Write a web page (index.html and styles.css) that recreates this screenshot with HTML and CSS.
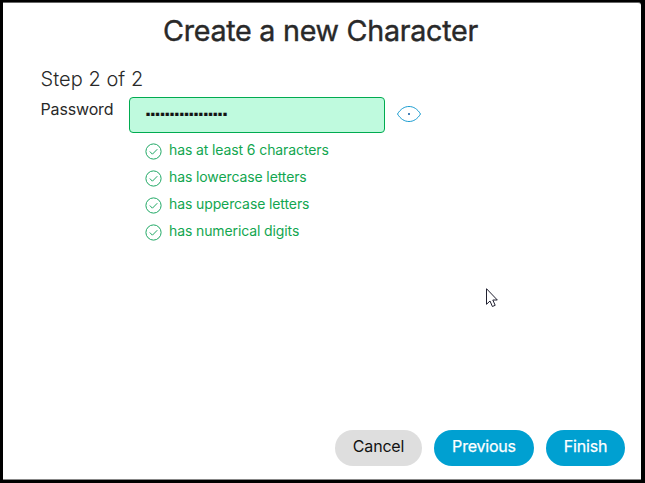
FILE: index.html
```html
<!DOCTYPE html>
<html lang="en">
<head>
<meta charset="utf-8">
<title>Create a new Character</title>
<link rel="stylesheet" href="styles.css">
</head>
<body>
<svg width="0" height="0" class="defs">
  <symbol id="check" viewBox="0 0 17 17"><circle cx="8.5" cy="8.5" r="7.6"/><path d="M4.8 8.5l2.6 2.7 4.9-5"/></symbol>
</svg>
<main class="dialog">
  <h1 class="title">Create a new Character</h1>
  <h2 class="step">Step 2 of 2</h2>
  <div class="row">
    <label class="label" for="pw">Password</label>
    <div class="field" id="pw">▪▪▪▪▪▪▪▪▪▪▪▪▪▪▪▪▪</div>
    <svg class="eye" viewBox="0 0 24 16"><path d="M.5 8C3.500 3 7.500.5 12 .5S20.500 3 23.500 8C20.500 13 16.500 15.500 12 15.500S3.500 13 .5 8z"/><rect x="11" y="7" width="2" height="2"/></svg>
  </div>
  <ul class="rules">
    <li><svg class="check"><use href="#check"/></svg><span>has at least 6 characters</span></li>
    <li><svg class="check"><use href="#check"/></svg><span>has lowercase letters</span></li>
    <li><svg class="check"><use href="#check"/></svg><span>has uppercase letters</span></li>
    <li><svg class="check"><use href="#check"/></svg><span>has numerical digits</span></li>
  </ul>
  <footer class="actions">
    <button class="btn cancel">Cancel</button>
    <button class="btn previous">Previous</button>
    <button class="btn finish">Finish</button>
  </footer>
</main>
<svg class="cursor" viewBox="0 0 12 20"><path d="M.5.7v15.600l3.500-3.300 2.400 5.500 2.800-1.200-2.400-5.300h4.500z"/></svg>
</body>
</html>
```
FILE: styles.css
```css
* { box-sizing: border-box; }
body {
  margin: 0;
  height: 483px;
  padding: 2px 4px 3px 3px;
  overflow: hidden;
  background: #000;
  color: #292929;
  font-family: Inter, "Liberation Sans", sans-serif;
}
.defs { position: absolute; }
.dialog {
  height: 478px;
  display: flex;
  flex-direction: column;
  background: #fff;
  border-top: 1px solid #666;
  border-bottom: 1px solid #888;
  border-top-right-radius: 3px;
}
.title {
  margin: 10px 0 0;
  padding-right: 3px;
  text-align: center;
  font-size: 28.700px;
  line-height: 36px;
  font-weight: 400;
  letter-spacing: -.28px;
  -webkit-text-stroke: .4px #292929;
}
.step {
  margin: 17px 0 0 37.5px;
  font-size: 20px;
  line-height: 26px;
  font-weight: 300;
  letter-spacing: .05px;
}
.row { display: flex; margin: 5px 0 0 37px; height: 36px; }
.label { width: 89px; padding-left: .5px; font-size: 16px; line-height: 24px; letter-spacing: -.15px; }
.field {
  width: 256px;
  height: 36px;
  padding-left: 16px;
  border: 1px solid #00ab50;
  border-radius: 4px;
  background: #bffade;
  color: #121212;
  font-family: "DejaVu Sans", sans-serif;
  font-size: 6px;
  line-height: 31px;
  letter-spacing: .74px;
  -webkit-text-stroke: .3px #121212;
}
.eye { width: 24px; height: 16px; margin: 9px 0 0 12px; fill: none; stroke: #1a9cd0; }
.eye rect { fill: #4a82b8; stroke: none; }
.rules { list-style: none; margin: 5px 0 0 142px; padding: 0; color: #12a64f; font-size: 14px; letter-spacing: -.11px; }
.rules li { display: flex; height: 27px; line-height: 24px; }
.check { width: 17px; height: 17px; margin: 5px 7px 0 0; fill: none; stroke: #20a865; stroke-width: 1; }
.actions { display: flex; gap: 12px; margin: auto 16px 13px auto; }
.btn {
  height: 36px;
  padding: 0 0 3px;
  border: 0;
  border-radius: 18px;
  background: #00a0d1;
  color: #fff;
  font: 400 16px/33px Inter, "Liberation Sans", sans-serif;
  letter-spacing: -.2px;
}
.cancel { width: 87px; background: #dedede; color: #121212; }
.previous { width: 100px; -webkit-text-stroke: .25px #fff; }
.finish { width: 79px; -webkit-text-stroke: .25px #fff; }
.cursor { position: absolute; left: 486px; top: 288px; width: 12px; height: 20px; fill: #fff; stroke: #202030; }
```
